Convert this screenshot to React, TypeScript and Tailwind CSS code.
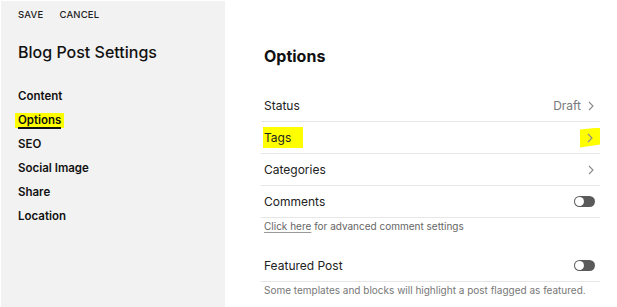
import React from 'react';

const navItems = ['Content', 'Options', 'SEO', 'Social Image', 'Share', 'Location'];

const Chevron = () => (
  <svg width="8" height="10" viewBox="0 0 8 10" className="text-[#8a8a8a]">
    <path d="M2 1l4 4-4 4" fill="none" stroke="currentColor" strokeWidth="1.1" />
  </svg>
);

const Toggle = () => (
  <div className="w-[21px] h-[11px] rounded-full bg-[#5a5a5a] flex items-center pl-[1px]">
    <div className="w-[9px] h-[9px] rounded-full bg-white" />
  </div>
);

const Row = ({ children, right }: { children: React.ReactNode; right: React.ReactNode }) => (
  <div className="h-[32px] flex items-center justify-between border-b border-[#e6e6e6] pl-[3px] pr-[5px]">
    <span className="text-[12px] text-[#222]">{children}</span>
    {right}
  </div>
);

export default function App() {
  return (
    <div className="w-[617px] h-[307px] flex bg-white overflow-hidden" style={{ fontFamily: 'Inter, Roboto, sans-serif' }}>
      <aside className="w-[225px] bg-[#f2f2f2] pl-[17px] pt-[7px] border-l border-t border-white">
        <div className="flex gap-[16px] text-[9.5px] font-medium text-[#222] tracking-[0.2px]">
          <span>SAVE</span>
          <span>CANCEL</span>
        </div>
        <h1 className="mt-[18px] text-[16px] font-medium text-[#111] leading-[24px]">Blog Post Settings</h1>
        <nav className="mt-[20px] flex flex-col">
          {navItems.map((item) => (
            <div key={item} className="h-[24px] flex items-center">
              {item === 'Options' ? (
                <span className="relative text-[11.5px] font-semibold text-[#111] bg-[#ffff00] -ml-[3px] pl-[3px] pr-[3px] leading-[15px]">
                  {item}
                  <span className="absolute left-[3px] right-[3px] -bottom-[1px] h-[2px] bg-[#111]" />
                </span>
              ) : (
                <span className="text-[11.5px] font-semibold text-[#111]">{item}</span>
              )}
            </div>
          ))}
        </nav>
      </aside>
      <main className="flex-1 pl-[36px] pr-[17px] pt-[45px]">
        <h2 className="pl-[3px] text-[16px] font-bold text-[#111] leading-[22px]">Options</h2>
        <div className="mt-[23px]">
          <Row right={<span className="flex items-center gap-[6px] text-[12px] text-[#7a7a7a]">Draft<Chevron /></span>}>Status</Row>
          <Row
            right={
              <span className="bg-[#ffff00] -mr-[5px] pl-[6px] pr-[6px] py-[5px] [clip-path:polygon(0_10%,100%_0,100%_85%,0_100%)]">
                <Chevron />
              </span>
            }
          >
            <span className="bg-[#ffff00] pr-[12px] py-[3px] -ml-[1px] pl-[1px]">Tags</span>
          </Row>
          <Row right={<Chevron />}>Categories</Row>
          <Row right={<Toggle />}>Comments</Row>
          <div className="h-[16px] pl-[3px] flex items-center text-[10px] text-[#666]">
            <span className="underline decoration-[#999] underline-offset-2">Click here</span>
            <span>&nbsp;for advanced comment settings</span>
          </div>
          <div className="h-[16px]" />
          <Row right={<Toggle />}>Featured Post</Row>
          <div className="pl-[3px] pt-[1px] text-[10px] text-[#777]">
            Some templates and blocks will highlight a post flagged as featured.
          </div>
        </div>
      </main>
    </div>
  );
}
